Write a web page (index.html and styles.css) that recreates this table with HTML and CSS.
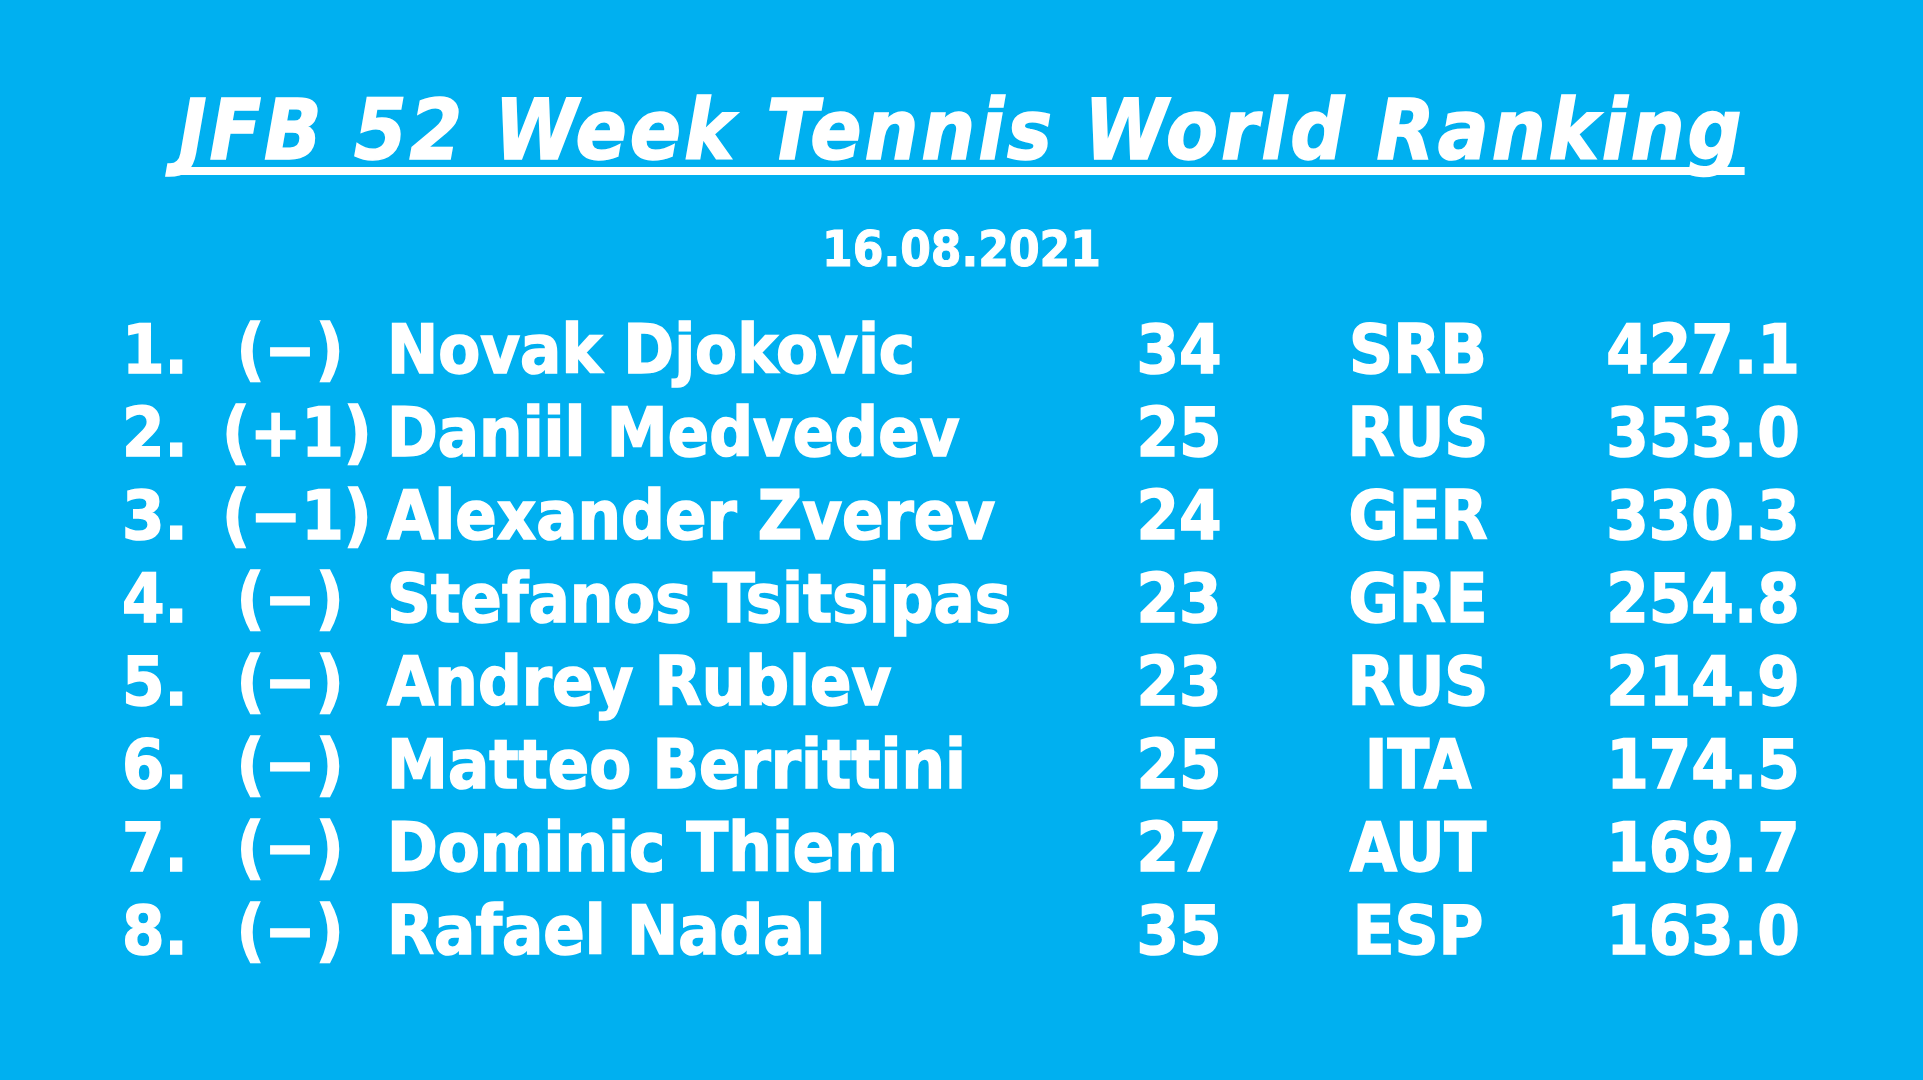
FILE: index.html
```html
<html>

<head>
	<title>JFB 52 Week Tennis World Ranking</title>
	<link rel="stylesheet" href="styles.css">
</head>

<body>
	<h1>JFB 52 Week Tennis World Ranking</h1>
	<p class="date">16.08.2021</p>

	<section class="ranking">
		<div class="row">
			<span class="pos">1.</span><span class="move">(&minus;)</span><span class="name">Novak Djokovic</span><span class="age">34</span><span class="nation">SRB</span><span class="points">427.1</span>
		</div>
		<div class="row">
			<span class="pos">2.</span><span class="move">(+1)</span><span class="name">Daniil Medvedev</span><span class="age">25</span><span class="nation">RUS</span><span class="points">353.0</span>
		</div>
		<div class="row">
			<span class="pos">3.</span><span class="move">(&minus;1)</span><span class="name">Alexander Zverev</span><span class="age">24</span><span class="nation">GER</span><span class="points">330.3</span>
		</div>
		<div class="row">
			<span class="pos">4.</span><span class="move">(&minus;)</span><span class="name">Stefanos Tsitsipas</span><span class="age">23</span><span class="nation">GRE</span><span class="points">254.8</span>
		</div>
		<div class="row">
			<span class="pos">5.</span><span class="move">(&minus;)</span><span class="name">Andrey Rublev</span><span class="age">23</span><span class="nation">RUS</span><span class="points">214.9</span>
		</div>
		<div class="row">
			<span class="pos">6.</span><span class="move">(&minus;)</span><span class="name">Matteo Berrittini</span><span class="age">25</span><span class="nation">ITA</span><span class="points">174.5</span>
		</div>
		<div class="row">
			<span class="pos">7.</span><span class="move">(&minus;)</span><span class="name">Dominic Thiem</span><span class="age">27</span><span class="nation">AUT</span><span class="points">169.7</span>
		</div>
		<div class="row">
			<span class="pos">8.</span><span class="move">(&minus;)</span><span class="name">Rafael Nadal</span><span class="age">35</span><span class="nation">ESP</span><span class="points">163.0</span>
		</div>
	</section>
</body>

</html>
```

FILE: styles.css
```css
* {
	box-sizing: border-box;
}

body {
	font-family: "DejaVu Sans Condensed", "DejaVu Sans", sans-serif;
	font-weight: bold;
	background-color: #00b0f0;
	color: white;
	-webkit-text-stroke: 1.5px white;
	margin: 0;
	padding-top: 80px;
	height: 1080px;
	overflow: hidden;
}

h1 {
	margin: 0;
	font-size: 84px;
	line-height: 100px;
	font-style: italic;
	letter-spacing: 3px;
	text-align: center;
	text-decoration: underline;
	text-decoration-thickness: 8px;
	text-underline-offset: 8px;
	text-decoration-skip-ink: none;
}

.date {
	margin: 40px 0 0;
	font-size: 49px;
	line-height: 60px;
	text-align: center;
	-webkit-text-stroke: 1px white;
}

.ranking {
	margin-top: 28px;
	padding-left: 122px;
}

.row {
	display: grid;
	grid-template-columns: 100px 136px 742px 158px 320px 250px;
	font-size: 68px;
	line-height: 83px;
	white-space: nowrap;
}

.move,
.age,
.nation,
.points {
	text-align: center;
}

.name {
	padding-left: 29px;
}
```
